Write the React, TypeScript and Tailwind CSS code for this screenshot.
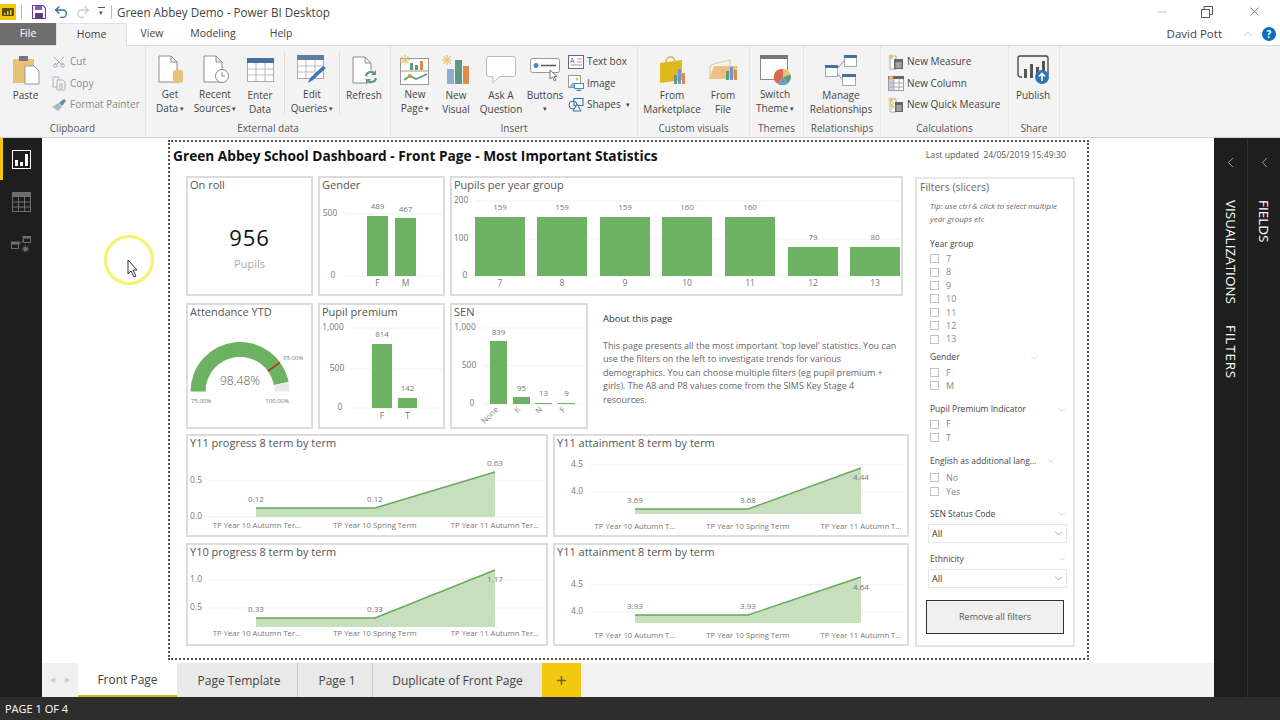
import type { ReactNode } from 'react'
import { ChevronDown, ChevronLeft, ChevronUp, Scissors, X, Minus, Plus, Undo2, Redo2 } from 'lucide-react'

const GREEN = '#6db262'
const Doc = () => <path d="M2 1h12l6 6v20H2z M14 1v6h6" fill="#fff" stroke="#8c8c8c" strokeWidth="1" />

function Sun({ x, y, r = 5 }: { x: number; y: number; r?: number }) {
  return (
    <g stroke="#e9c27a" strokeWidth="1.2">
      {[0, 45, 90, 135].map(a => {
        const dx = Math.cos((a * Math.PI) / 180) * r
        const dy = Math.sin((a * Math.PI) / 180) * r
        return <line key={a} x1={x - dx} y1={y - dy} x2={x + dx} y2={y + dy} />
      })}
    </g>
  )
}

function Big({ w, a, b, caret, children }: { w: number; a: string; b?: string; caret?: boolean; children: ReactNode }) {
  return (
    <div className="flex flex-col items-center shrink-0" style={{ width: w }}>
      <div className="h-[42px] flex items-center justify-center pt-[6px]">{children}</div>
      <div className="text-[10px] leading-[14px] text-[#444] text-center whitespace-nowrap">{a}</div>
      <div className="text-[10px] leading-[14px] text-[#444] text-center whitespace-nowrap">
        {b}
        {caret && <span className="text-[7px] align-[1px]"> ▾</span>}
      </div>
    </div>
  )
}

function Small({ icon, text, muted, caret }: { icon: ReactNode; text: string; muted?: boolean; caret?: boolean }) {
  return (
    <div className={`h-[21.5px] flex items-center gap-[3px] whitespace-nowrap text-[10px] ${muted ? 'text-[#8a8a8a]' : 'text-[#444]'}`}>
      <div className="w-[16px] h-[16px] flex items-center justify-center shrink-0">{icon}</div>
      {text}
      {caret && <span className="text-[7px] ml-[2px]">▾</span>}
    </div>
  )
}

function Group({ w, label, children }: { w: number; label: string; children: ReactNode }) {
  return (
    <div className="h-full shrink-0 flex flex-col border-r border-[#e4e4e4]" style={{ width: w }}>
      <div className="h-[70px] flex">{children}</div>
      <div className="mt-[5px] h-[14px] leading-[14px] text-[10px] text-[#555] text-center">{label}</div>
    </div>
  )
}

const VSep = () => <div className="w-px h-[62px] mt-[6px] bg-[#dedede] shrink-0" />

function Plot({ x, y, w, h, title, children }: { x: number; y: number; w: number; h: number; title: string; children: ReactNode }) {
  return (
    <div className="border-2 border-[#dcdcdc] bg-white shrink-0 flex flex-col" style={{ width: w, height: h }}>
      <div className="h-[18px] pl-[2px] text-[11px] leading-[14px] text-[#555] whitespace-nowrap">{title}</div>
      <svg width={w - 4} height={h - 22} viewBox={`${x + 2} ${y + 20} ${w - 4} ${h - 22}`} className="overflow-visible">
        {children}
      </svg>
    </div>
  )
}

function T({ x, y, children, a = 'middle', s = 8, c = '#777' }: { x: number; y: number; children: ReactNode; a?: 'start' | 'middle' | 'end'; s?: number; c?: string }) {
  return (
    <text x={x} y={y} textAnchor={a} dominantBaseline="middle" fontSize={s} fill={c}>
      {children}
    </text>
  )
}

const Grid = ({ x1, x2, y }: { x1: number; x2: number; y: number }) => <line x1={x1} x2={x2} y1={y} y2={y} stroke="#efefef" strokeWidth="1" />

type Bar = { x: number; w: number; top: number; label: string; ly: number; cat?: string }
function Bars({ bars, base, catY }: { bars: Bar[]; base: number; catY?: number }) {
  return (
    <>
      {bars.map(b => (
        <g key={b.x}>
          <rect x={b.x} y={b.top} width={b.w} height={base - b.top} fill={GREEN} />
          <T x={b.x + b.w / 2} y={b.ly}>{b.label}</T>
          {b.cat && catY && <T x={b.x + b.w / 2} y={catY} s={8.5}>{b.cat}</T>}
        </g>
      ))}
    </>
  )
}

function AreaChart({ x, y, title, w, axis, px, ly, base, labels, cats, catY, gx, gap, catNames }: {
  x: number; y: number; title: string; w: number
  axis: [string, number][]; px: number[]; ly: number[]; base: number
  labels: [string, number][]; cats: number[]; catY: number; gx: [number, number]; gap: number; catNames: string[]
}) {
  const line = px.map((p, i) => `${p},${ly[i]}`).join(' ')
  return (
    <Plot x={x} y={y} w={w} h={103} title={title}>
      {axis.map(([t, ay]) => (
        <g key={t}>
          <Grid x1={gx[0]} x2={gx[1]} y={ay} />
          <T x={gx[0] - gap} y={ay} a="end" s={8.5}>{t}</T>
        </g>
      ))}
      <polygon points={`${px[0]},${base} ${line} ${px[2]},${base}`} fill="#c6dfbc" />
      <polyline points={line} fill="none" stroke="#6aa75e" strokeWidth="1.4" />
      {labels.map(([t, ly2], i) => (
        <T key={i} x={px[i]} y={ly2} s={8}>{t}</T>
      ))}
      {cats.map((c, i) => (
        <T key={c} x={c} y={catY} s={7.7}>{catNames[i]}</T>
      ))}
    </Plot>
  )
}

function Gauge() {
  const cx = 240
  const cy = 391.5
  const pt = (r: number, f: number) => {
    const a = Math.PI * (1 - f)
    return `${(cx + r * Math.cos(a)).toFixed(1)} ${(cy - r * Math.sin(a)).toFixed(1)}`
  }
  const arc = (f1: number, f2: number, fill: string) => (
    <path d={`M${pt(49.5, f1)} A49.5 49.5 0 0 1 ${pt(49.5, f2)} L${pt(34.5, f2)} A34.5 34.5 0 0 0 ${pt(34.5, f1)} Z`} fill={fill} />
  )
  const r1 = pt(34.5, 0.8).split(' ')
  const r2 = pt(49.5, 0.8).split(' ')
  return (
    <>
      {arc(0, 0.9392, GREEN)}
      {arc(0.9392, 1, '#e9e9e9')}
      <line x1={r1[0]} y1={r1[1]} x2={r2[0]} y2={r2[1]} stroke="#b5301a" strokeWidth="1.6" />
      <text x={240} y={382} textAnchor="middle" dominantBaseline="middle" fontSize={12} fontWeight={300} fill="#555">98.48%</text>
      <T x={283} y={358.5} a="start" s={6}>95.00%</T>
      <T x={191} y={401} a="start" s={6}>75.00%</T>
      <T x={289} y={401} a="end" s={6}>100.00%</T>
    </>
  )
}

function Check({ label }: { label: string }) {
  return (
    <div className="h-[13.4px] flex items-center gap-[7px] text-[9px] text-[#888]">
      <div className="w-[9px] h-[9px] border border-[#c4c4c4] shrink-0" />
      {label}
    </div>
  )
}

function SlicerHead({ label, chevron, className }: { label: string; chevron?: number; className: string }) {
  return (
    <div className={`flex items-center h-[12px] text-[8.5px] text-[#444] whitespace-nowrap ${className}`}>
      <span>{label}</span>
      {chevron !== undefined && <ChevronDown className="w-[10px] h-[10px] text-[#999] absolute" style={{ left: chevron }} strokeWidth={1} />}
    </div>
  )
}

function Select() {
  return (
    <div className="mt-[4px] -ml-[2px] w-[139px] h-[19px] border border-[#e8e8e8] flex items-center justify-between pl-[3px] pr-[1px] text-[9px] text-[#333]">
      All
      <ChevronDown className="w-[13px] h-[13px] text-[#666]" strokeWidth={1} />
    </div>
  )
}

const terms = ['TP Year 10 Autumn Ter...', 'TP Year 10 Spring Term', 'TP Year 11 Autumn Ter...']
const termsShort = ['TP Year 10 Autumn T...', 'TP Year 10 Spring Term', 'TP Year 11 Autumn T...']

export default function App() {
  return (
    <div className="w-[1280px] h-[720px] overflow-hidden flex flex-col bg-white font-['Open_Sans','Noto_Sans',sans-serif]">
      {/* Title bar */}
      <div className="h-[23px] flex items-center shrink-0 relative">
        <svg width="17" height="16" viewBox="0 0 17 16" className="shrink-0">
          <rect width="16" height="16" fill="#f2c811" />
          <rect x="2" y="4" width="12" height="8" rx="1" fill="#5a4a10" />
          <path d="M4 11V9h1.5v2zM7 11V7h1.5v4zM10 11V6h1.5v5z" fill="#f2c811" />
        </svg>
        <div className="w-px h-[14px] bg-[#bbb] ml-[4px]" />
        <svg width="14" height="14" viewBox="0 0 14 14" className="ml-[10px]">
          <path d="M.5.5h10.5l2.5 2.5v10.5H.5z" fill="#fff" stroke="#6b3f8f" strokeWidth="1.2" />
          <rect x="3" y="1" width="7" height="4" fill="#8a5fae" />
          <rect x="3" y="8" width="8" height="5.5" fill="#5c3b7e" />
        </svg>
        <Undo2 className="w-[16px] h-[16px] text-[#2f6fa7] ml-[7px]" strokeWidth={2} />
        <Redo2 className="w-[16px] h-[16px] text-[#b9cfe2] ml-[6px]" strokeWidth={2} />
        <div className="ml-[6px] w-[8px] text-[#555] text-[7px] leading-[6px] text-center">
          <div className="h-px w-[7px] bg-[#555] mb-[2px] mx-auto" />
          ▾
        </div>
        <div className="w-px h-[14px] bg-[#bbb] ml-[6px]" />
        <div className="ml-[5px] pt-[2px] text-[11.7px] text-[#444] whitespace-nowrap">Green Abbey Demo - Power BI Desktop</div>
        <div className="absolute right-0 top-0 h-[23px] flex items-center">
          <Minus className="w-[14px] h-[14px] text-[#aaa] mr-[32px]" strokeWidth={1.2} />
          <svg width="12" height="12" viewBox="0 0 12 12" className="mr-[34px]">
            <path d="M.5 3.5h8v8h-8z M3 3.5V.5h8.5v8h-3" fill="none" stroke="#555" strokeWidth="1" />
          </svg>
          <X className="w-[15px] h-[15px] text-[#444] mr-[18px]" strokeWidth={1} />
        </div>
      </div>

      {/* Menu tabs */}
      <div className="h-[23px] flex shrink-0 border-b border-[#dcdcdc] text-[10.5px] text-[#444] relative">
        <div className="w-[56px] bg-[#6e6e6e] text-white flex items-center justify-center">File</div>
        <div className="w-[71px] h-[23px] bg-[#f3f3f3] border-t border-x border-[#e0e0e0] flex items-center justify-center">Home</div>
        <div className="w-[50px] flex items-center justify-center">View</div>
        <div className="w-[72px] flex items-center justify-center">Modeling</div>
        <div className="w-[64px] flex items-center justify-center">Help</div>
        <div className="ml-auto flex items-center">
          <span className="text-[11.5px] text-[#444]">David Pott</span>
          <ChevronUp className="w-[14px] h-[14px] text-[#aaa] ml-[19px]" strokeWidth={1.2} />
          <div className="w-[14px] h-[14px] rounded-full bg-[#0f6cbd] text-white text-[10px] font-bold flex items-center justify-center ml-[7px] mr-[4px]">?</div>
        </div>
      </div>

      {/* Ribbon */}
      <div className="h-[92px] shrink-0 bg-[#f3f3f3] border-b border-[#d4d4d4] flex">
        <Group w={146} label="Clipboard">
          <Big w={51} a="Paste">
            <svg width="28" height="30" viewBox="0 0 28 30">
              <path d="M1 4h21v24H1z" fill="#e9c27a" />
              <rect x="7" y="1" width="9" height="5" fill="#777" />
              <path d="M13 11h9l5 5v13H13z" fill="#fff" stroke="#999" />
            </svg>
          </Big>
          <div className="pt-[5px] flex flex-col">
            <Small muted text="Cut" icon={<Scissors className="w-[14px] h-[14px] text-[#7d97b5] -rotate-90" strokeWidth={1.3} />} />
            <Small
              muted
              text="Copy"
              icon={
                <svg width="14" height="15" viewBox="0 0 14 15" fill="none" stroke="#aab4c0">
                  <path d="M1 1h6v10H1z" />
                  <path d="M5 4h6l2 2v8H5z" fill="#f3f3f3" />
                  <path d="M7 8h4M7 10h4M7 12h4" />
                </svg>
              }
            />
            <Small
              muted
              text="Format Painter"
              icon={
                <svg width="16" height="14" viewBox="0 0 16 14">
                  <path d="M1 9l6-4 4 4-4 4z" fill="#a9b9cb" />
                  <path d="M8 5l5-4 2 2-4 5z" fill="#6f87a3" />
                </svg>
              }
            />
          </div>
        </Group>

        <Group w={245} label="External data">
          <Big w={48} a="Get" b="Data" caret>
            <svg width="27" height="29" viewBox="0 0 27 29">
              <Doc />
              <path d="M16 17c0-3 10-3 10 0v9c0 3-10 3-10 0z" fill="#e9c27a" />
            </svg>
          </Big>
          <Big w={42} a="Recent" b="Sources" caret>
            <svg width="27" height="29" viewBox="0 0 27 29">
              <Doc />
              <circle cx="20" cy="21" r="6.5" fill="#fff" stroke="#7a8a9a" />
              <path d="M20 17v4h3" fill="none" stroke="#7a8a9a" />
            </svg>
          </Big>
          <Big w={48} a="Enter" b="Data">
            <svg width="27" height="24" viewBox="0 0 27 24">
              <rect x=".5" y=".5" width="26" height="23" fill="#fff" stroke="#aaa" />
              <rect width="27" height="5" fill="#44709d" />
              <path d="M0 11h27M0 17h27M9 5v18M18 5v18" stroke="#bbb" />
            </svg>
          </Big>
          <VSep />
          <Big w={54} a="Edit" b="Queries" caret>
            <svg width="30" height="29" viewBox="0 0 30 29">
              <rect x=".5" y=".5" width="26" height="23" fill="#fff" stroke="#aaa" />
              <rect width="27" height="5" fill="#5e7f9f" />
              <path d="M0 11h27M0 17h27M9 5v18M18 5v18" stroke="#bbb" />
              <path d="M11 28l2-5L26 11l3 2-13 12z" fill="#3f76b0" />
            </svg>
          </Big>
          <VSep />
          <Big w={48} a="Refresh">
            <svg width="27" height="29" viewBox="0 0 27 29">
              <Doc />
              <circle cx="20" cy="21" r="7" fill="#f3f3f3" />
              <path d="M15 20a5 5 0 0 1 9-2M25 22a5 5 0 0 1-9 2" fill="none" stroke="#5d9c82" strokeWidth="2.2" />
              <path d="M25 14v5h-5zM15 28v-5h5z" fill="#5d9c82" />
            </svg>
          </Big>
        </Group>

        <Group w={247} label="Insert">
          <Big w={48} a="New" b="Page" caret>
            <svg width="30" height="30" viewBox="0 0 30 30">
              <rect x=".5" y="3.5" width="28" height="26" fill="#fff" stroke="#999" />
              <path d="M0 16h29" stroke="#999" />
              <rect x="10" y="8" width="3" height="7" fill="#5f9a80" />
              <rect x="15" y="10" width="3" height="5" fill="#5f9a80" />
              <rect x="20" y="6" width="3" height="9" fill="#e08a4a" />
              <path d="M4 25l6-4 6 3 7-3 4-2" fill="none" stroke="#5f9a80" strokeWidth="1.6" />
              <circle cx="10" cy="21" r="2" fill="#e08a4a" />
              <Sun x={5} y={5} />
            </svg>
          </Big>
          <Big w={34} a="New" b="Visual">
            <svg width="28" height="30" viewBox="0 0 28 30">
              <rect x="5" y="14" width="7" height="15" fill="#8caed4" />
              <rect x="13" y="5" width="7" height="24" fill="#5f9a80" />
              <rect x="21" y="11" width="6" height="18" fill="#e08a4a" />
              <Sun x={5} y={5} />
            </svg>
          </Big>
          <Big w={56} a="Ask A" b="Question">
            <svg width="30" height="28" viewBox="0 0 30 28">
              <path d="M3 .5h24a2.500 2.500 0 0 1 2.500 2.500v15a2.500 2.500 0 0 1-2.500 2.500H14l-7 6v-6H3A2.500 2.500 0 0 1 .5 18V3A2.500 2.500 0 0 1 3 .5z" fill="#fff" stroke="#bbb" />
            </svg>
          </Big>
          <div className="w-[32px] flex flex-col items-center shrink-0">
            <div className="h-[42px] flex items-center justify-center pt-[6px]">
              <svg width="31" height="24" viewBox="0 0 31 24">
                <rect x=".5" y=".5" width="29" height="14" rx="2" fill="#fff" stroke="#999" />
                <circle cx="6" cy="7.500" r="2.500" fill="#4a86c5" />
                <path d="M11 7.500h15" stroke="#555" strokeWidth="1.500" />
                <path d="M20 12l0 9 2.500-2 2 4 1.500-1-2-3.500 3 0z" fill="#fff" stroke="#555" strokeWidth=".8" />
              </svg>
            </div>
            <div className="text-[10px] leading-[14px] text-[#444] whitespace-nowrap">Buttons</div>
            <div className="text-[7px] leading-[14px] text-[#444]">▾</div>
          </div>
          <div className="ml-[7px] pt-[5px] flex flex-col">
            <Small
              text="Text box"
              icon={
                <svg width="16" height="14" viewBox="0 0 16 14" fill="none" stroke="#668">
                  <rect x=".5" y=".5" width="15" height="13" fill="#fff" />
                  <path d="M9 4h5M9 7h5M3 10h11" stroke="#999" />
                  <text x="2" y="8" fontSize="7" fill="#2f6fa7" stroke="none">A</text>
                </svg>
              }
            />
            <Small
              text="Image"
              icon={
                <svg width="16" height="16" viewBox="0 0 16 16">
                  <rect x=".5" y=".5" width="12" height="12" fill="#fff" stroke="#999" />
                  <path d="M1 12l4-5 3 5z" fill="#9ab4d2" />
                  <circle cx="9" cy="4" r="1.500" fill="#e9c27a" />
                  <rect x="6.500" y="8.500" width="9" height="5" fill="#fff" stroke="#4a86c5" />
                  <path d="M11 14v2M8.500 15.500h5" stroke="#4a86c5" />
                </svg>
              }
            />
            <Small
              caret
              text="Shapes"
              icon={
                <svg width="16" height="14" viewBox="0 0 16 14" fill="none" stroke="#2f6fa7">
                  <circle cx="5" cy="7" r="4" />
                  <rect x="6" y=".5" width="9" height="7" />
                  <path d="M9 6l4 7H5z" fill="#f3f3f3" />
                </svg>
              }
            />
          </div>
        </Group>

        <Group w={112} label="Custom visuals">
          <Big w={68} a="From" b="Marketplace">
            <svg width="27" height="30" viewBox="0 0 27 30">
              <path d="M7 7a4 4 0 0 1 9-1" fill="none" stroke="#c9a227" strokeWidth="1.200" />
              <path d="M1 8l22-3v20L1 28z" fill="#e0b71c" />
              <rect x="15" y="20" width="3" height="9" fill="#5f9a80" />
              <rect x="19" y="14" width="3" height="15" fill="#6e97c9" />
              <rect x="23" y="18" width="3" height="11" fill="#e08a4a" />
            </svg>
          </Big>
          <Big w={34} a="From" b="File">
            <svg width="29" height="26" viewBox="0 0 29 26">
              <path d="M1 22V9l6-3h2l12-3v6" fill="none" stroke="#e5c48e" />
              <path d="M0 22l5-13h24l-5 13z" fill="#ebc185" />
              <rect x="17" y="14" width="3" height="9" fill="#5f9a80" />
              <rect x="21" y="10" width="3" height="13" fill="#6e97c9" />
              <rect x="25" y="13" width="3" height="10" fill="#e08a4a" />
            </svg>
          </Big>
        </Group>

        <Group w={54} label="Themes">
          <Big w={50} a="Switch" b="Theme" caret>
            <svg width="31" height="30" viewBox="0 0 31 30">
              <rect x=".5" y=".5" width="27" height="24" fill="#fff" stroke="#888" />
              <rect width="28" height="4" fill="#777" />
              <circle cx="23" cy="22" r="8" fill="#f3f3f3" />
              <path d="M23 22V14a8 8 0 0 1 7.500 5.500z" fill="#e9c27a" />
              <path d="M23 22l7.500-2.500A8 8 0 0 1 27 29z" fill="#5f9a80" />
              <path d="M23 22l4 7a8 8 0 0 1-9 0z" fill="#6e97c9" />
              <path d="M23 22l-5 7a8 8 0 0 1 5-15z" fill="#d96b4a" />
            </svg>
          </Big>
        </Group>

        <Group w={77} label="Relationships">
          <Big w={74} a="Manage" b="Relationships">
            <svg width="32" height="31" viewBox="0 0 32 31">
              <path d="M11 15l8-9M11 17l6 7" stroke="#888" fill="none" />
              <rect x="19.500" y=".5" width="12" height="11" fill="#fff" stroke="#9ab" />
              <rect x="19" width="13" height="3" fill="#44709d" />
              <rect x=".5" y="10.500" width="12" height="11" fill="#fff" stroke="#9ab" />
              <rect y="10" width="13" height="3" fill="#44709d" />
              <rect x="17.500" y="19.500" width="13" height="11" fill="#fff" stroke="#9ab" />
              <rect x="17" y="19" width="14" height="3" fill="#44709d" />
            </svg>
          </Big>
        </Group>

        <Group w={128} label="Calculations">
          <div className="pl-[7px] pt-[5px] flex flex-col">
            <Small
              text="New Measure"
              icon={
                <svg width="16" height="16" viewBox="0 0 16 16">
                  <path d="M2 2h6v13H2z" fill="#fff" stroke="#aaa" />
                  <rect x="6" y="5" width="9" height="10" fill="#666" />
                  <path d="M7.500 9h6M7.500 11h6M7.500 13h6" stroke="#ddd" />
                  <Sun x={3} y={3} r={2.500} />
                </svg>
              }
            />
            <Small
              text="New Column"
              icon={
                <svg width="16" height="16" viewBox="0 0 16 16">
                  <rect x=".5" y="1.500" width="15" height="14" fill="#fff" stroke="#999" />
                  <rect y="1" width="16" height="3" fill="#666" />
                  <rect x="1" y="4" width="5" height="11" fill="#bcd3ea" />
                  <path d="M0 8h16M0 12h16M6 4v11M11 4v11" stroke="#aaa" />
                  <Sun x={3} y={3} r={2.500} />
                </svg>
              }
            />
            <Small
              text="New Quick Measure"
              icon={
                <svg width="16" height="16" viewBox="0 0 16 16">
                  <path d="M2 2h6v13H2z" fill="#fff" stroke="#aaa" />
                  <path d="M5 5L2 10h2l-1 4 4-5H5l1-4z" fill="#e9c27a" />
                  <rect x="7" y="5" width="8" height="10" fill="#666" />
                  <path d="M8.500 9h5M8.500 11h5M8.500 13h5" stroke="#ddd" />
                  <Sun x={3} y={3} r={2.500} />
                </svg>
              }
            />
          </div>
        </Group>

        <Group w={51} label="Share">
          <Big w={48} a="Publish">
            <svg width="33" height="30" viewBox="0 0 33 30">
              <path d="M5 22H3a2 2 0 0 1-2-2V3a2 2 0 0 1 2-2h26a2 2 0 0 1 2 2v17" fill="none" stroke="#444" strokeWidth="1.300" />
              <rect x="7" y="14" width="3" height="9" fill="#555" />
              <rect x="13" y="9" width="3" height="14" fill="#555" />
              <rect x="19" y="12" width="3" height="11" fill="#555" />
              <rect x="25" y="6" width="3" height="14" fill="#555" />
              <circle cx="25" cy="22" r="7" fill="#2f74b5" />
              <path d="M25 26v-7M22 21.500l3-3 3 3" fill="none" stroke="#fff" strokeWidth="1.600" />
            </svg>
          </Big>
        </Group>
      </div>

      {/* Main */}
      <div className="flex-1 flex min-h-0">
        {/* Left rail */}
        <div className="w-[42px] shrink-0 bg-[#1e1e1e] flex flex-col">
          <div className="h-[42px] pt-[1px] border-l-[3px] border-[#f2c811] flex items-center justify-center pr-[3px]">
            <svg width="19" height="19" viewBox="0 0 19 19">
              <rect x=".5" y=".5" width="18" height="18" fill="none" stroke="#fff" />
              <path d="M3 16v-6h3v6zM8 16v-4h3v4zM13 16V4h3v12z" fill="#fff" />
            </svg>
          </div>
          <div className="h-[42px] pt-[2px] flex items-center justify-center">
            <svg width="19" height="20" viewBox="0 0 19 20">
              <rect x=".5" y=".5" width="18" height="19" fill="none" stroke="#6e6e6e" />
              <rect width="19" height="5" fill="#6e6e6e" />
              <path d="M0 10h19M0 15h19M6.500 5v15M12.500 5v15" stroke="#6e6e6e" />
            </svg>
          </div>
          <div className="h-[42px] pt-[5px] flex items-center justify-center">
            <svg width="20" height="19" viewBox="0 0 20 19" fill="none" stroke="#6e6e6e">
              <rect x=".5" y="6.500" width="7" height="6" />
              <rect y="6" width="8" height="2" fill="#6e6e6e" />
              <rect x="12.500" y=".5" width="7" height="6" />
              <rect x="12" width="8" height="2" fill="#6e6e6e" />
              <path d="M8 8l4-3" />
              <circle cx="14.500" cy="13" r="2" fill="#6e6e6e" />
              <path d="M14.500 9v8M10.500 13h8M11.500 10l6 6M17.500 10l-6 6" strokeDasharray="1 1" />
            </svg>
          </div>
        </div>

        {/* Canvas column */}
        <div className="flex-1 min-w-0 flex flex-col">
          <div className="flex-1 min-h-0 relative">
            <div className="ml-[126px] mt-[2px] w-[921px] h-[520px] border-2 border-dotted border-[#555] flex flex-col">
              <div className="h-[28px] flex items-center justify-between pl-[3px] pr-[21px]">
                <div className="text-[13.7px] font-bold text-[#111] whitespace-nowrap">Green Abbey School Dashboard - Front Page - Most Important Statistics</div>
                <div className="text-[8.7px] text-[#555] whitespace-nowrap">Last updated&nbsp; 24/05/2019 15:49:30</div>
              </div>

              <div className="mt-[6px] ml-[16px] flex gap-[6px]">
                {/* Visuals */}
                <div className="w-[723px] flex flex-col shrink-0">
                  <div className="flex gap-[5px]">
                    <div className="w-[127px] h-[120px] border-2 border-[#dcdcdc] flex flex-col shrink-0">
                      <div className="h-[18px] pl-[2px] text-[11px] leading-[14px] text-[#555]">On roll</div>
                      <div className="text-[22px] leading-[30px] text-[#111] text-center mt-[26px] tracking-[1px]">956</div>
                      <div className="text-[11px] leading-[16px] text-[#aaa] text-center mt-[4px]">Pupils</div>
                    </div>
                    <Plot x={318} y={176} w={127} h={120} title="Gender">
                      <Grid x1={344} x2={442} y={214} />
                      <Grid x1={344} x2={442} y={276} />
                      <T x={330} y={214} s={8.5}>500</T>
                      <T x={333} y={276} s={8.5}>0</T>
                      <Bars base={276} catY={284} bars={[
                        { x: 367, w: 21, top: 216, label: '489', ly: 207, cat: 'F' },
                        { x: 395, w: 21, top: 218, label: '467', ly: 210, cat: 'M' },
                      ]} />
                    </Plot>
                    <Plot x={450} y={176} w={453} h={120} title="Pupils per year group">
                      <Grid x1={475} x2={900} y={201} />
                      <Grid x1={475} x2={900} y={239} />
                      <Grid x1={475} x2={900} y={276} />
                      <T x={461} y={201} s={8.5}>200</T>
                      <T x={461} y={239} s={8.5}>100</T>
                      <T x={465} y={276} s={8.5}>0</T>
                      <Bars base={276} catY={284} bars={[
                        { x: 475, w: 50, top: 217, label: '159', ly: 208, cat: '7' },
                        { x: 537, w: 50, top: 217, label: '159', ly: 208, cat: '8' },
                        { x: 600, w: 50, top: 217, label: '159', ly: 208, cat: '9' },
                        { x: 662, w: 50, top: 217, label: '160', ly: 208, cat: '10' },
                        { x: 725, w: 50, top: 217, label: '160', ly: 208, cat: '11' },
                        { x: 788, w: 50, top: 247, label: '79', ly: 238, cat: '12' },
                        { x: 850, w: 50, top: 247, label: '80', ly: 238, cat: '13' },
                      ]} />
                    </Plot>
                  </div>

                  <div className="flex gap-[5px] mt-[7px]">
                    <Plot x={186} y={303} w={127} h={126} title="Attendance YTD">
                      <Gauge />
                    </Plot>
                    <Plot x={318} y={303} w={127} h={126} title="Pupil premium">
                      <Grid x1={350} x2={442} y={328} />
                      <Grid x1={350} x2={442} y={369} />
                      <Grid x1={350} x2={442} y={408} />
                      <T x={333} y={328} s={8.5}>1,000</T>
                      <T x={337} y={369} s={8.5}>500</T>
                      <T x={340} y={408} s={8.5}>0</T>
                      <Bars base={408} catY={417} bars={[
                        { x: 372, w: 20, top: 344, label: '814', ly: 335, cat: 'F' },
                        { x: 398, w: 19, top: 398, label: '142', ly: 389, cat: 'T' },
                      ]} />
                    </Plot>
                    <Plot x={450} y={303} w={138} h={126} title="SEN">
                      <Grid x1={483} x2={585} y={328} />
                      <Grid x1={483} x2={585} y={366} />
                      <Grid x1={483} x2={585} y={404} />
                      <T x={465} y={328} s={8.5}>1,000</T>
                      <T x={469} y={366} s={8.5}>500</T>
                      <T x={472} y={404} s={8.5}>0</T>
                      <Bars base={404} bars={[
                        { x: 490, w: 17, top: 341, label: '839', ly: 333 },
                        { x: 513, w: 17, top: 397, label: '95', ly: 389 },
                        { x: 535, w: 17, top: 403, label: '13', ly: 394 },
                        { x: 558, w: 17, top: 403, label: '9', ly: 394 },
                      ]} />
                      <text x={499} y={410} textAnchor="end" fontSize="8" fill="#888" transform="rotate(-45 499 410)">None</text>
                      <text x={521} y={410} textAnchor="end" fontSize="8" fill="#888" transform="rotate(-45 521 410)">K</text>
                      <text x={543} y={410} textAnchor="end" fontSize="8" fill="#888" transform="rotate(-45 543 410)">N</text>
                      <text x={566} y={410} textAnchor="end" fontSize="8" fill="#888" transform="rotate(-45 566 410)">F</text>
                    </Plot>
                    <div className="ml-[10px] w-[294px] pt-[9px] text-[#666]">
                      <div className="text-[9.5px] leading-[14px] text-[#333]">About this page</div>
                      <p className="mt-[13px] text-[9px] leading-[13.4px]">
                        This page presents all the most important 'top level' statistics. You can use the filters on the left to investigate trends for various demographics. You can choose multiple filters (eg pupil premium + girls). The A8 and P8 values come from the SIMS Key Stage 4 resources.
                      </p>
                    </div>
                  </div>

                  <div className="flex gap-[5px] mt-[5px]">
                    <AreaChart x={186} y={434} w={362} title="Y11 progress 8 term by term" gap={6}
                      axis={[['0.5', 481], ['0.0', 517]]} gx={[208, 544]} px={[256, 375, 495]} ly={[508, 508, 472]} base={517}
                      labels={[['0.12', 500], ['0.12', 500], ['0.63', 464]]} cats={[257, 375, 495]} catY={526} catNames={terms} />
                    <AreaChart x={553} y={434} w={356} title="Y11 attainment 8 term by term" gap={7}
                      axis={[['4.5', 465], ['4.0', 492]]} gx={[590, 905]} px={[635, 748, 861]} ly={[509, 509, 468]} base={514}
                      labels={[['3.69', 501], ['3.68', 501], ['4.44', 478]]} cats={[635, 748, 861]} catY={527} catNames={termsShort} />
                  </div>
                  <div className="flex gap-[5px] mt-[6px]">
                    <AreaChart x={186} y={543} w={362} title="Y10 progress 8 term by term" gap={6}
                      axis={[['1.0', 580], ['0.5', 608]]} gx={[208, 544]} px={[256, 375, 495]} ly={[618, 618, 570]} base={627}
                      labels={[['0.33', 610], ['0.33', 610], ['1.17', 580]]} cats={[257, 375, 495]} catY={634} catNames={terms} />
                    <AreaChart x={553} y={543} w={356} title="Y11 attainment 8 term by term" gap={7}
                      axis={[['4.5', 585], ['4.0', 612]]} gx={[590, 905]} px={[635, 748, 861]} ly={[615, 615, 577]} base={623}
                      labels={[['3.93', 607], ['3.93', 607], ['4.64', 588]]} cats={[635, 748, 861]} catY={636} catNames={termsShort} />
                  </div>
                </div>

                {/* Filters */}
                <div className="relative w-[160px] h-[470px] mt-[1px] border-2 border-[#e4e4e4] border-t-[#e8e8e8] shrink-0 flex flex-col pl-[13px] overflow-hidden">
                  <div className="-ml-[10px] text-[10.5px] leading-[16px] text-[#666] whitespace-nowrap">Filters (slicers)</div>
                  <div className="mt-[4px] text-[8px] leading-[13px] italic text-[#666] w-[140px]">Tip: use ctrl &amp; click to select multiple year groups etc</div>
                  <SlicerHead label="Year group" className="mt-[13px]" />
                  <div className="mt-[2px]">
                    {['7', '8', '9', '10', '11', '12', '13'].map(v => <Check key={v} label={v} />)}
                  </div>
                  <SlicerHead label="Gender" chevron={112} className="mt-[6px]" />
                  <div className="mt-[2px]">
                    <Check label="F" />
                    <Check label="M" />
                  </div>
                  <SlicerHead label="Pupil Premium Indicator" chevron={140} className="mt-[11px]" />
                  <div className="mt-[2px]">
                    <Check label="F" />
                    <Check label="T" />
                  </div>
                  <SlicerHead label="English as additional lang..." chevron={129} className="mt-[11px]" />
                  <div className="mt-[4px]">
                    <Check label="No" />
                    <Check label="Yes" />
                  </div>
                  <SlicerHead label="SEN Status Code" chevron={140} className="mt-[10px]" />
                  <Select />
                  <SlicerHead label="Ethnicity" chevron={140} className="mt-[10px]" />
                  <Select />
                  <div className="mt-[12px] -ml-[4px] w-[138px] h-[34px] border-[1.5px] border-[#333] bg-[#f0f0f0] flex items-center justify-center text-[9px] text-[#555]">Remove all filters</div>
                </div>
              </div>
            </div>

            {/* Presenter cursor */}
            <div className="absolute left-[62px] top-[97px] w-[50px] h-[50px] rounded-full border-[3px] border-[#f6f26b]" />
            <svg width="14" height="20" viewBox="0 0 14 20" className="absolute left-[85px] top-[121px]">
              <path d="M1 1v14l3-3 3 6 2-1-3-6h4z" fill="#fff" stroke="#333" strokeWidth="1" />
            </svg>
          </div>

          {/* Page tabs */}
          <div className="h-[34px] shrink-0 bg-[#f3f3f3] flex text-[12px] text-[#444]">
            <div className="w-[36px] bg-[#f0f0f0] flex items-center justify-center gap-[10px] text-[#ccc] text-[7px]">
              <span>◀</span>
              <span>▶</span>
            </div>
            <div className="w-[99px] pt-[1px] bg-white border-b-2 border-[#d9b310] flex items-center justify-center">Front Page</div>
            <div className="w-[121px] pt-[2px] pl-[4px] bg-[#e9e9e9] border-r border-[#c8c8c8] flex items-center justify-center">Page Template</div>
            <div className="w-[75px] pt-[2px] pl-[4px] bg-[#e9e9e9] border-r border-[#c8c8c8] flex items-center justify-center">Page 1</div>
            <div className="w-[169px] pt-[2px] bg-[#e9e9e9] flex items-center justify-center">Duplicate of Front Page</div>
            <div className="w-[39px] bg-[#f2c811] flex items-center justify-center">
              <Plus className="w-[13px] h-[13px] text-[#6d6430]" strokeWidth={3} />
            </div>
          </div>
        </div>

        {/* Right rail */}
        <div className="w-[66px] shrink-0 bg-[#1e1e1e] flex text-white text-[13.5px] font-medium">
          <div className="w-[34px] border-r border-[#333] flex flex-col items-center pt-[16px]">
            <ChevronLeft className="w-[17px] h-[17px] text-[#bbb]" strokeWidth={1.2} />
            <div className="mt-[29px] [writing-mode:vertical-rl] whitespace-nowrap">VISUALIZATIONS</div>
            <div className="mt-[21px] [writing-mode:vertical-rl] whitespace-nowrap tracking-[0.8px]">FILTERS</div>
          </div>
          <div className="flex-1 flex flex-col items-center pt-[16px]">
            <ChevronLeft className="w-[17px] h-[17px] text-[#bbb]" strokeWidth={1.2} />
            <div className="mt-[29px] [writing-mode:vertical-rl] whitespace-nowrap">FIELDS</div>
          </div>
        </div>
      </div>

      {/* Status bar */}
      <div className="h-[23px] pt-[1px] shrink-0 bg-[#2d2d2d] flex items-center pl-[5px] text-[11px] text-white">PAGE 1 OF 4</div>
    </div>
  )
}
